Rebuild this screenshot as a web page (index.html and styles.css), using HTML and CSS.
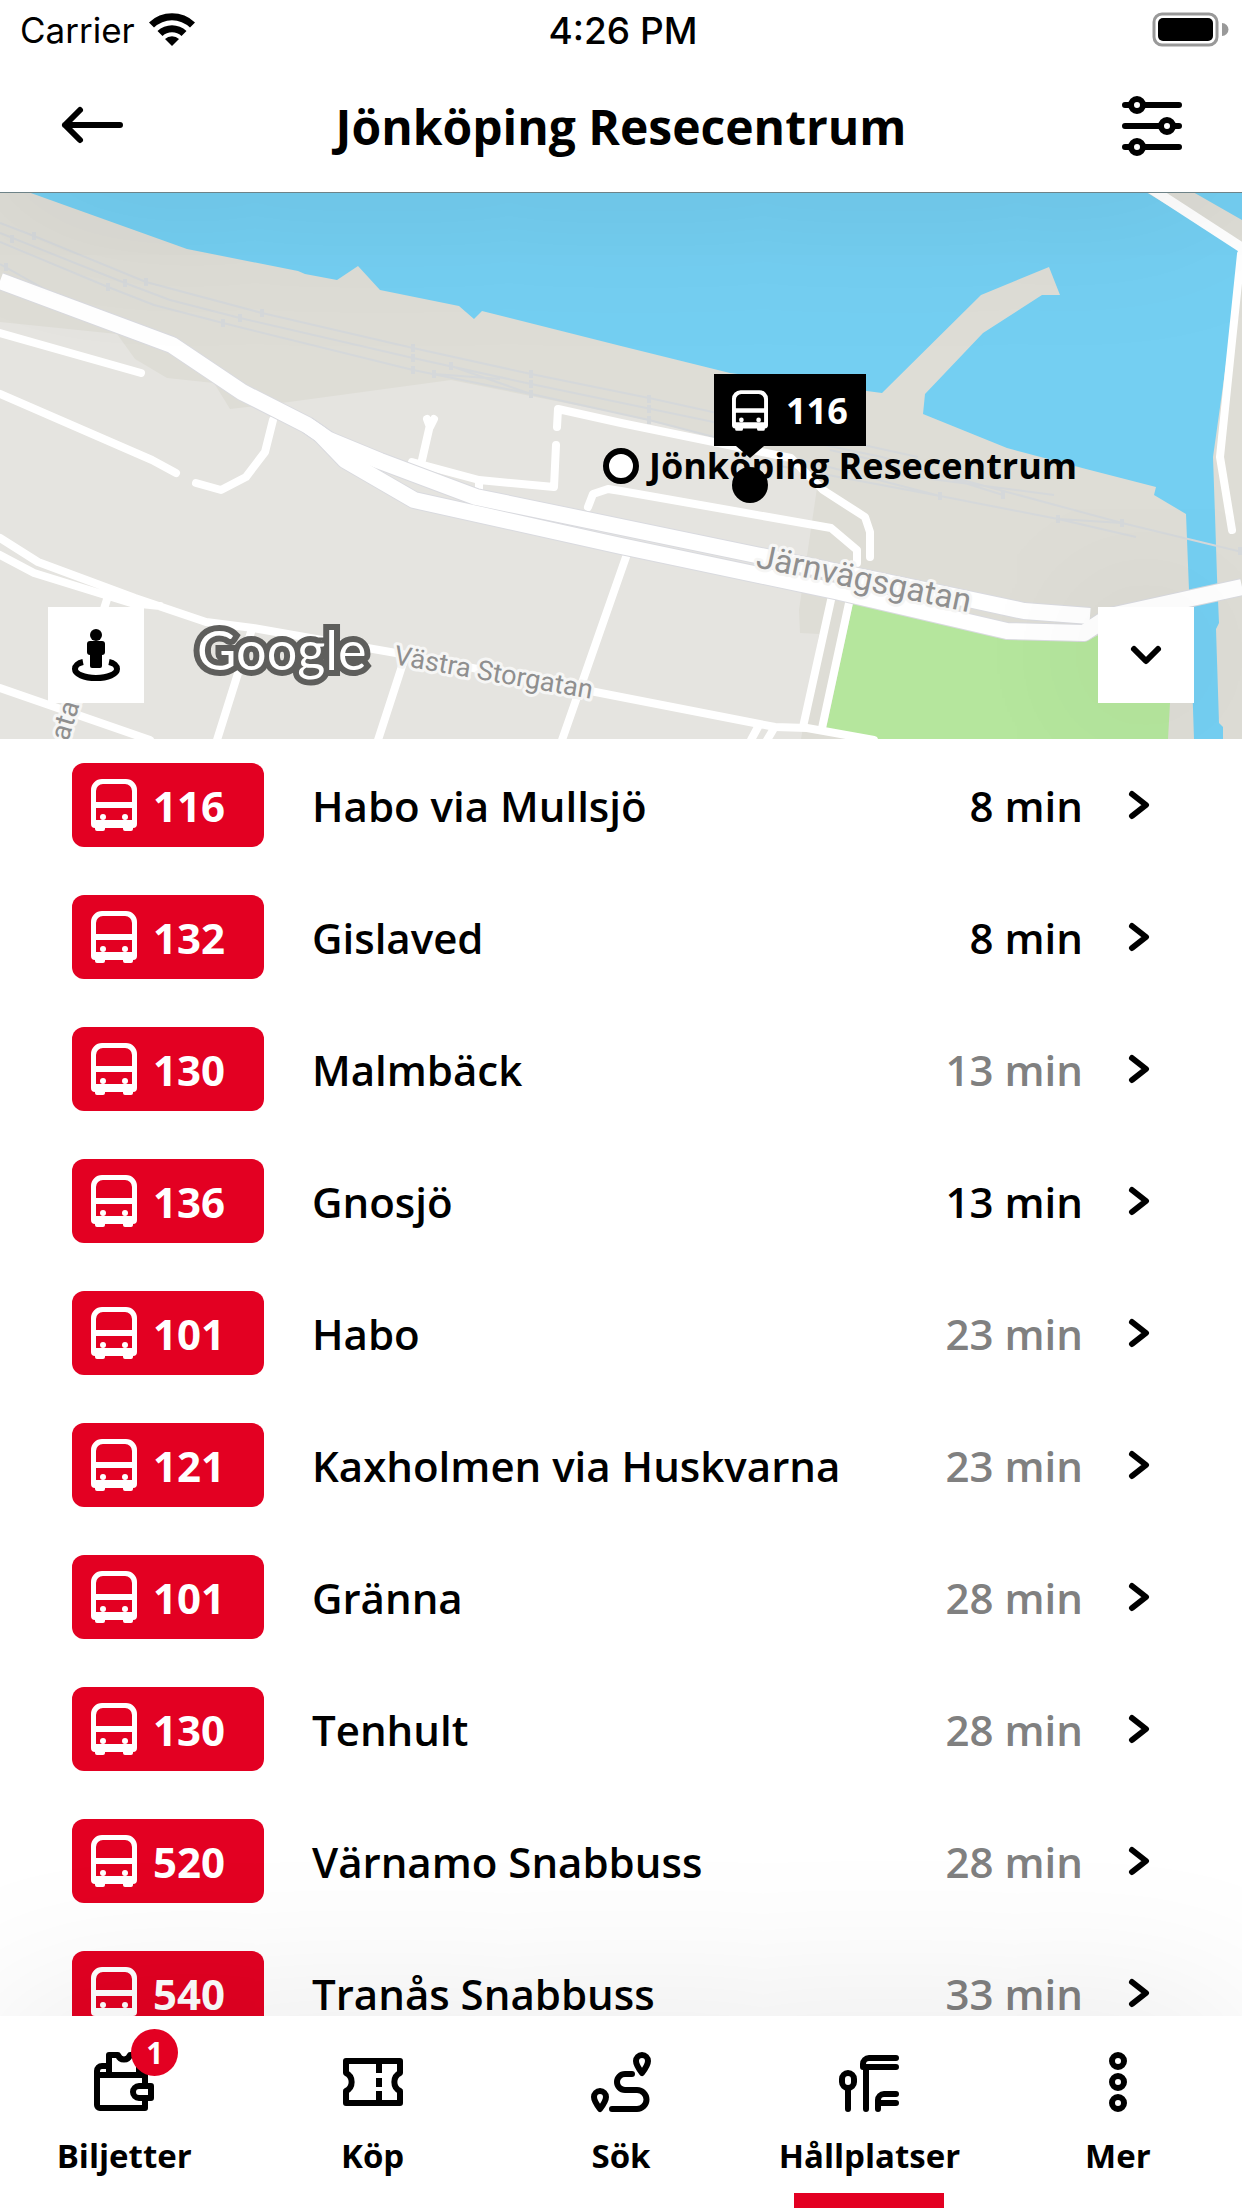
FILE: index.html
```html
<!DOCTYPE html>
<html lang="sv">
<head>
    <meta charset="UTF-8">
    <meta name="viewport" content="width=device-width, initial-scale=1.0">
    <title>Jönköping Resecentrum</title>
    <link rel="stylesheet" href="styles.css">
</head>
<body>

<!-- Shared icons -->
<svg class="sprite" aria-hidden="true">
    <symbol id="bus" viewBox="0 0 46 52">
        <path fill="currentColor" fill-rule="evenodd" d="M11 0h24a11 11 0 0 1 11 11v34a4 4 0 0 1-4 4v1a2 2 0 0 1-2 2h-6a2 2 0 0 1-2-2v-1H14v1a2 2 0 0 1-2 2H6a2 2 0 0 1-2-2v-1a4 4 0 0 1-4-4V11A11 11 0 0 1 11 0zM12 5a7 7 0 0 0-7 7v11h36V12a7 7 0 0 0-7-7zM5 29v12h36V29z"/>
        <circle cx="12" cy="38" r="3" fill="currentColor"/>
        <circle cx="34" cy="38" r="3" fill="currentColor"/>
    </symbol>
    <symbol id="chevron" viewBox="0 0 26 32">
        <path class="line" d="M6 5l14 11L6 27"/>
    </symbol>
</svg>

<!-- Status bar -->
<div class="status">
    <div class="status-side">
        <span>Carrier</span>
        <svg width="46" height="34" viewBox="0 0 46 34">
            <path d="M0 9.500a33 33 0 0 1 46 0l-5 5a26 26 0 0 0-36 0z"/>
            <path d="M8.500 18a21 21 0 0 1 29 0l-5 5a14 14 0 0 0-19 0z"/>
            <path d="M16 26a10 10 0 0 1 14 0l-7 7z"/>
        </svg>
    </div>
    <span class="clock">4:26 PM</span>
    <div class="status-side status-right">
        <svg width="74" height="36" viewBox="0 0 74 36">
            <rect x="2" y="2" width="63" height="31" rx="8" fill="none" stroke="#999" stroke-width="3"/>
            <rect x="6" y="6" width="55" height="23" rx="5"/>
            <path d="M70 11a6 6 0 0 1 0 13z" fill="#999"/>
        </svg>
    </div>
</div>

<!-- Header -->
<header class="header">
    <button class="icon-btn" aria-label="Tillbaka">
        <svg width="60" height="60" viewBox="0 0 60 60">
            <path class="line" d="M60 29H5M20 14L5 29l15 15"/>
        </svg>
    </button>
    <h1>Jönköping Resecentrum</h1>
    <button class="icon-btn" aria-label="Filter">
        <svg width="60" height="60" viewBox="0 0 60 60">
            <path class="line" d="M3 9h6M21 9h36M3 30h36M51 30h6M3 51h6M21 51h36"/>
            <circle class="line" cx="15" cy="9" r="6"/>
            <circle class="line" cx="45" cy="30" r="6"/>
            <circle class="line" cx="15" cy="51" r="6"/>
        </svg>
    </button>
</header>

<!-- Map -->
<section class="map">
    <svg class="map-canvas" viewBox="0 193 1242 546" preserveAspectRatio="xMidYMid slice">
        <rect class="water" y="192" width="1242" height="547"/>
        <path class="land" d="M0 192H28L187 249 298 271 305 274 337 280 358 266 380 290 459 306 474 319 482 311 621 346 730 373 882 393 981 295 1049 267 1060 295 1042 295 983 333 925 394 923 414 1007 448 1086 469 1156 487 1154 495 1186 514 1189 590 1194 739H0z"/>
        <path class="land" d="M1146 192H1193L1242 220V250zM1242 250L1213 457 1215 515 1217 577 1219 623 1216 629 1219 723 1223 727V739H1242z"/>
        <path class="town" d="M0 322L117 334 135 359 167 378 214 383 230 409 289 402 451 380 621 414 800 458 817 488 799 610 800 633 819 634 801 739H0z"/>
        <path class="park" d="M853 603L1009 637 1084 642 1172 600 1170 703 1168 739H874L826 729z"/>

        <!-- railway -->
        <path class="rail" d="M0 223L34 236 146 282 262 313 413 348 531 374 649 398 918 457M0 233L125 283 170 300 240 318 413 358 531 384 882 457 1003 495M0 242L108 287 154 305 223 323 413 370 531 394 649 420 940 496M0 264L64 300M434 374L500 379M451 366L531 394M780 466L940 496 1058 519 1136 537M830 450L970 482 1122 523 1242 552M900 475L1054 495M1058 519L1122 523"/>
        <path class="tick" d="M34 232v8M146 278v8M262 309v8M413 344v8M531 370v8M12 235v8M125 279v8M240 314v8M413 354v8M531 380v8M108 283v8M223 319v8M413 366v8M531 390v8M6 263v8M434 370v8M451 362v8M649 395v8M649 405v8M649 416v8M940 492v8M1003 491v8M1058 515v8M1122 519v8M1240 547v8"/>

        <!-- small streets -->
        <g class="street">
            <path d="M0 333L141 373M0 394L152 460 176 473M273 420L265 452 246 477 221 490 196 483"/>
            <path d="M427 419L430 427 434 419M430 425L422 460M412 462L479 480 554 487 556 445M479 480V495"/>
            <path d="M557 427L558 409 621 423 791 458 823 490 865 517 870 532V557"/>
            <path d="M588 507L593 494 608 489 621 491 831 528 857 550V563"/>
            <path d="M0 538L38 562 135 598 206 622 253 628 396 653 621 697 775 727 807 728 874 740M0 555L34 573 131 603 160 606"/>
            <path d="M109 593L75 700 62 740M0 688L150 740M251 632L217 740M404 660L378 740M626 557L562 740"/>
            <path d="M831 600L803 727M849 603L822 728M758 727L751 740M773 730L767 740"/>
        </g>
        <path class="quay" d="M1150 188L1244 249"/>
        <path class="street" d="M1241 254L1220 457 1232 530"/>

        <!-- main road, both lanes -->
        <g class="road-edge">
            <path d="M0 281L172 345 242 392 307 425 329 440 380 461 476 497 621 527 756 555 968 599 1024 611 1090 616"/>
            <path d="M307 425L320 434 345 460 414 500 621 546 835 591 1007 631 1084 633 1110 616 1242 587"/>
        </g>
        <g class="road">
            <path d="M0 281L172 345 242 392 307 425 329 440 380 461 476 497 621 527 756 555 968 599 1024 611 1090 616"/>
            <path d="M307 425L320 434 345 460 414 500 621 546 835 591 1007 631 1084 633 1110 616 1242 587"/>
        </g>

        <text class="street-name" font-size="33" transform="translate(755 567) rotate(12)">Järnvägsgatan</text>
        <text class="street-name" font-size="27" transform="translate(393 664) rotate(10)">Västra Storgatan</text>
        <text class="street-name" font-size="28" transform="translate(68 742) rotate(-73)">atan</text>
        <text class="google" x="197" y="670">Google</text>
    </svg>

    <div class="stop-name"><span class="stop-ring"></span>Jönköping Resecentrum</div>
    <div class="pin">
        <div class="pin-label"><svg width="36" height="41"><use href="#bus"/></svg>116</div>
        <div class="pin-tip"></div>
        <div class="pin-dot"></div>
    </div>

    <div class="map-tools">
        <button class="map-btn" aria-label="Gatuvy">
            <svg width="48" height="54" viewBox="0 0 48 54">
                <circle cx="24" cy="7" r="6"/>
                <rect x="15" y="13" width="18" height="14" rx="3"/>
                <rect x="18" y="16" width="12" height="24" rx="2"/>
                <path class="ring" d="M11 34c-5 1-8 4-8 7 0 5 9 9 21 9s21-4 21-9c0-3-3-6-8-7"/>
            </svg>
        </button>
        <button class="map-btn" aria-label="Fäll ihop kartan">
            <svg width="30" height="22" viewBox="0 0 30 22"><path class="line" d="M3 5l12 12L27 5"/></svg>
        </button>
    </div>
</section>

<!-- Departures -->
<ul class="departures">
    <li><a href="#"><span class="line-no"><svg width="46" height="52"><use href="#bus"/></svg>116</span><span class="dest">Habo via Mullsjö</span><span class="time">8 min</span><svg width="26" height="32"><use href="#chevron"/></svg></a></li>
    <li><a href="#"><span class="line-no"><svg width="46" height="52"><use href="#bus"/></svg>132</span><span class="dest">Gislaved</span><span class="time">8 min</span><svg width="26" height="32"><use href="#chevron"/></svg></a></li>
    <li><a href="#"><span class="line-no"><svg width="46" height="52"><use href="#bus"/></svg>130</span><span class="dest">Malmbäck</span><span class="time planned">13 min</span><svg width="26" height="32"><use href="#chevron"/></svg></a></li>
    <li><a href="#"><span class="line-no"><svg width="46" height="52"><use href="#bus"/></svg>136</span><span class="dest">Gnosjö</span><span class="time">13 min</span><svg width="26" height="32"><use href="#chevron"/></svg></a></li>
    <li><a href="#"><span class="line-no"><svg width="46" height="52"><use href="#bus"/></svg>101</span><span class="dest">Habo</span><span class="time planned">23 min</span><svg width="26" height="32"><use href="#chevron"/></svg></a></li>
    <li><a href="#"><span class="line-no"><svg width="46" height="52"><use href="#bus"/></svg>121</span><span class="dest">Kaxholmen via Huskvarna</span><span class="time planned">23 min</span><svg width="26" height="32"><use href="#chevron"/></svg></a></li>
    <li><a href="#"><span class="line-no"><svg width="46" height="52"><use href="#bus"/></svg>101</span><span class="dest">Gränna</span><span class="time planned">28 min</span><svg width="26" height="32"><use href="#chevron"/></svg></a></li>
    <li><a href="#"><span class="line-no"><svg width="46" height="52"><use href="#bus"/></svg>130</span><span class="dest">Tenhult</span><span class="time planned">28 min</span><svg width="26" height="32"><use href="#chevron"/></svg></a></li>
    <li><a href="#"><span class="line-no"><svg width="46" height="52"><use href="#bus"/></svg>520</span><span class="dest">Värnamo Snabbuss</span><span class="time planned">28 min</span><svg width="26" height="32"><use href="#chevron"/></svg></a></li>
    <li><a href="#"><span class="line-no"><svg width="46" height="52"><use href="#bus"/></svg>540</span><span class="dest">Tranås Snabbuss</span><span class="time planned">33 min</span><svg width="26" height="32"><use href="#chevron"/></svg></a></li>
</ul>

<!-- Tab bar -->
<nav class="tabs">
    <a href="#">
        <span class="tab-icon">
            <svg width="60" height="60" viewBox="0 0 60 60">
                <path class="line" d="M15 14H8a5 5 0 0 0-5 5v34a3 3 0 0 0 3 3h45V46M3 23h48v11M57 34H45a6 6 0 0 0 0 12h12z"/>
                <path class="line" d="M15 23V3h9c2 6 10 6 12 0h9v20"/>
            </svg>
            <span class="count">1</span>
        </span>
        Biljetter
    </a>
    <a href="#">
        <svg width="60" height="60" viewBox="0 0 60 60">
            <path class="line" d="M3 9h54v12a10 10 0 0 0 0 18v12H3V39a10 10 0 0 0 0-18z"/>
            <path class="line butt" d="M36 9v12M36 26v9M36 39v12"/>
        </svg>
        Köp
    </a>
    <a href="#">
        <svg width="60" height="60" viewBox="0 0 60 60">
            <path class="line" d="M41 22h-7a8 8 0 0 0 0 16h12a9 9 0 0 1 0 19H21"/>
            <path class="line" d="M51 3a6 6 0 0 1 6 6c0 4-6 12-6 12s-6-8-6-12a6 6 0 0 1 6-6zM9 39a6 6 0 0 1 6 6c0 4-6 12-6 12s-6-8-6-12a6 6 0 0 1 6-6z"/>
        </svg>
        Sök
    </a>
    <a href="#" class="active">
        <svg width="60" height="60" viewBox="0 0 60 60">
            <rect class="line" x="3" y="21" width="12" height="15" rx="6"/>
            <path class="line" d="M9 37v20M27 16v41M57 6H30a6 6 0 0 0-6 6v3h33M57 42H45a6 6 0 0 0-6 6v9M40 51h17"/>
        </svg>
        Hållplatser
    </a>
    <a href="#">
        <svg width="60" height="60" viewBox="0 0 60 60">
            <circle class="line" cx="30" cy="9" r="6"/>
            <circle class="line" cx="30" cy="30" r="6"/>
            <circle class="line" cx="30" cy="51" r="6"/>
        </svg>
        Mer
    </a>
</nav>

</body>
</html>
```
FILE: styles.css
```css
* {
    box-sizing: border-box;
}
body {
    display: flex;
    flex-direction: column;
    height: 100vh;
    margin: 0;
    overflow: hidden;
    background-color: white;
    color: black;
    font-family: "Open Sans", "Noto Sans", sans-serif;
}
a {
    color: inherit;
    text-decoration: none;
}
button {
    display: flex;
    align-items: center;
    justify-content: center;
    padding: 0;
    border: none;
    background: none;
    cursor: pointer;
}
svg {
    flex: none;
    overflow: visible;
}
.sprite {
    position: absolute;
    width: 0;
    height: 0;
}
.line {
    fill: none;
    stroke: currentColor;
    stroke-width: 6px;
    stroke-linecap: round;
    stroke-linejoin: round;
}
.butt {
    stroke-linecap: butt;
}

/* status bar */
.status {
    position: relative;
    z-index: 3;
    display: flex;
    align-items: center;
    height: 60px;
    padding: 0 16px 0 20px;
    background-color: white;
    font-family: Inter, sans-serif;
    font-size: 35px;
}
.status-side {
    display: flex;
    flex: 1;
    align-items: center;
    gap: 14px;
}
.status-right {
    justify-content: flex-end;
}
.clock {
    font-size: 37px;
    font-weight: 500;
}

/* header */
.header {
    position: relative;
    z-index: 2;
    display: flex;
    align-items: center;
    justify-content: space-between;
    height: 133px;
    padding: 0 60px;
    background-color: white;
    border-bottom: 1px solid #6e8388;
    box-shadow: 0 0 180px rgba(0, 0, 0, 0.1);
}
.header h1 {
    margin: 0;
    font-size: 48px;
    font-weight: 700;
}

/* map */
.map {
    position: relative;
    flex: none;
    height: 546px;
    overflow: hidden;
}
.map-canvas {
    display: block;
    width: 100%;
    height: 100%;
}
.water { fill: #74cff2; }
.land { fill: #deddd6; }
.town { fill: #e5e4e0; }
.park { fill: #b5e69d; }
.rail, .tick, .street, .quay, .road, .road-edge {
    fill: none;
    stroke-linejoin: round;
}
.rail {
    stroke: #d5d8da;
    stroke-width: 2px;
}
.tick {
    stroke: #d5d8da;
    stroke-width: 4px;
}
.street {
    stroke: white;
    stroke-width: 8px;
    stroke-linecap: round;
}
.quay {
    stroke: white;
    stroke-width: 10px;
}
.road-edge {
    stroke: #d9dadf;
    stroke-width: 18px;
}
.road {
    stroke: white;
    stroke-width: 16px;
}
.street-name {
    fill: #8f8f8f;
    stroke: #f6f6f5;
    stroke-width: 6px;
    stroke-linejoin: round;
    paint-order: stroke;
    font-family: Roboto, sans-serif;
}
.google {
    fill: white;
    stroke: #5e5e5c;
    stroke-width: 12px;
    paint-order: stroke;
    font-family: Lato, sans-serif;
    font-size: 54px;
    font-weight: 400;
}
.stop-name {
    position: absolute;
    top: 249px;
    left: calc(50% - 18px);
    display: flex;
    align-items: center;
    gap: 10px;
    font-size: 36px;
    font-weight: 700;
    line-height: 48px;
    white-space: nowrap;
}
.stop-ring {
    width: 36px;
    height: 36px;
    border: 6px solid black;
    border-radius: 50%;
    background-color: white;
}
.pin {
    position: absolute;
    top: 181px;
    left: calc(50% + 93px);
    width: 152px;
}
.pin-label {
    display: flex;
    align-items: center;
    gap: 18px;
    height: 72px;
    padding-left: 18px;
    background-color: black;
    color: white;
    font-size: 36px;
    font-weight: 700;
}
.pin-tip {
    width: 28px;
    height: 12px;
    margin-left: 22px;
    background-color: black;
    clip-path: polygon(0 0, 100% 0, 50% 100%);
}
.pin-dot {
    width: 36px;
    height: 36px;
    margin: 9px 0 0 18px;
    border-radius: 50%;
    background-color: black;
}
.map-tools {
    position: absolute;
    right: 48px;
    bottom: 36px;
    left: 48px;
    display: flex;
    justify-content: space-between;
}
.map-btn {
    width: 96px;
    height: 96px;
    background-color: white;
}
.map-btn:last-child {
    box-shadow: 0 0 160px rgba(0, 0, 0, 0.1);
}
.ring {
    fill: none;
    stroke: black;
    stroke-width: 6px;
}

/* departures */
.departures {
    flex: 1;
    min-height: 0;
    margin: 0;
    padding: 0;
    overflow: hidden;
    list-style: none;
}
.departures a {
    display: flex;
    align-items: center;
    height: 132px;
    padding: 0 90px 0 72px;
    font-size: 42px;
    font-weight: 600;
}
.line-no {
    display: flex;
    align-items: center;
    gap: 16px;
    width: 192px;
    height: 84px;
    padding-left: 19px;
    border-radius: 12px;
    background-color: #e30022;
    color: white;
    font-weight: 700;
}
.dest {
    flex: 1;
    padding-left: 48px;
}
.time {
    padding-right: 43px;
}
.planned {
    color: #808080;
}

/* tab bar */
.tabs {
    position: relative;
    z-index: 2;
    display: flex;
    height: 192px;
    background-color: white;
    box-shadow: 0 0 180px rgba(0, 0, 0, 0.1);
}
.tabs a {
    display: flex;
    flex: 1;
    flex-direction: column;
    align-items: center;
    gap: 21px;
    padding-top: 36px;
    font-size: 33px;
    font-weight: 700;
    line-height: 46px;
}
.tabs .active {
    background: linear-gradient(#e30022, #e30022) center bottom / 150px 15px no-repeat;
}
.tab-icon {
    position: relative;
    height: 60px;
}
.tab-icon svg {
    display: block;
}
.count {
    position: absolute;
    top: -23px;
    left: 37px;
    width: 47px;
    height: 47px;
    border-radius: 50%;
    background-color: #e30022;
    color: white;
    font-size: 30px;
    line-height: 47px;
    text-align: center;
}
```
